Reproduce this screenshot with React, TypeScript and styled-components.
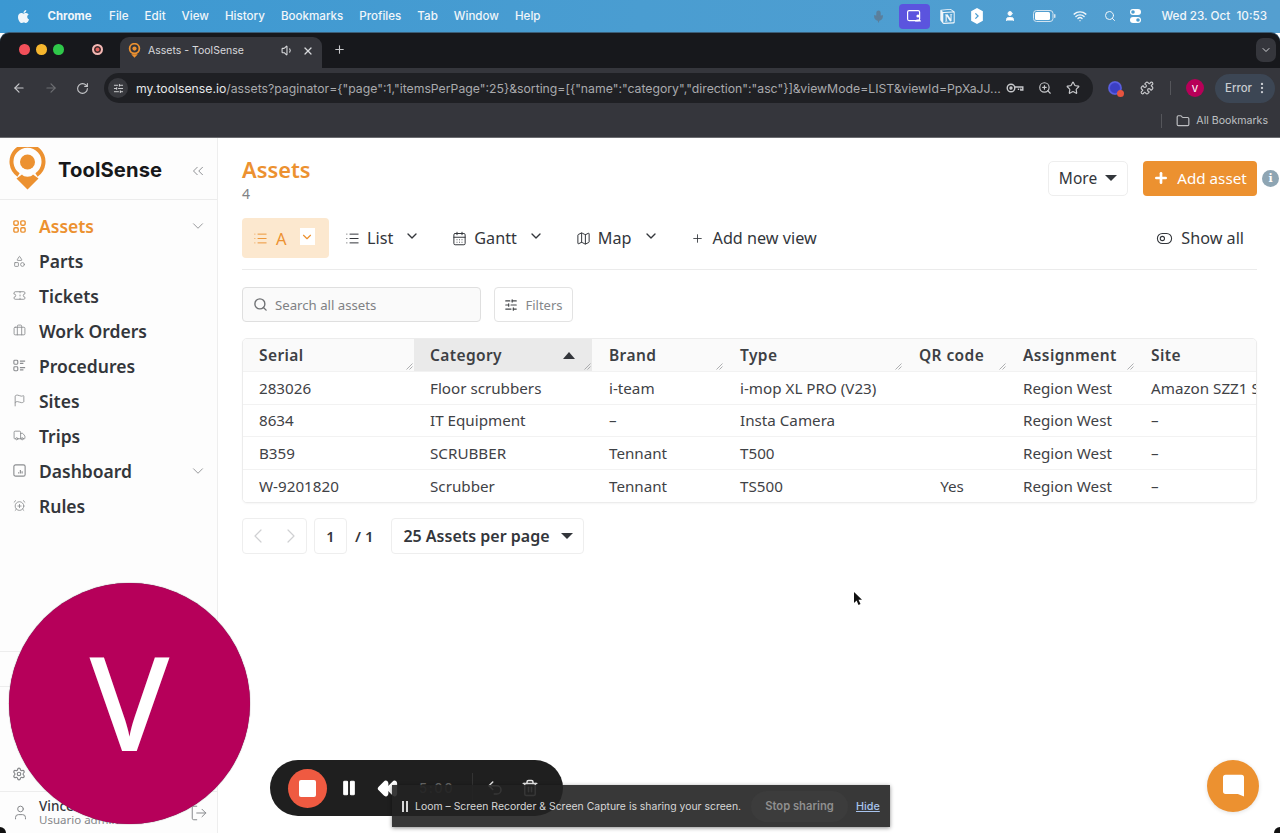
import React from "react";
import styled, { createGlobalStyle } from "styled-components";
import {
  AlarmClockPlus, ArrowLeft, ArrowRight, Briefcase, CalendarDays, ChevronDown, ChevronLeft, ChevronRight,
  ChevronsLeft, EllipsisVertical, Flag, Folder, List, LogOut, Map as MapIcon, Mic, Pause,
  Plus, Puzzle, Rewind, RotateCw, Search, Settings, Shapes, SlidersHorizontal, Star, Ticket,
  ToggleLeft, Trash2, Truck, Undo2, User, Volume1, Wifi, X, ZoomIn,
} from "lucide-react";
import { FaApple } from "react-icons/fa";
import { SiNotion } from "react-icons/si";

const Global = createGlobalStyle`
  html, body { margin: 0; padding: 0; width: 1280px; height: 833px; overflow: hidden; background: #fff; }
  * { box-sizing: border-box; }
  body { font-family: "Noto Sans", "Open Sans", sans-serif; color: #33363b; }
`;

const orange = "#ec9130";

const Screen = styled.div`
  position: relative; width: 1280px; height: 833px; overflow: hidden;
  display: flex; flex-direction: column; background: #fff;
`;

/* macOS menu bar */
const MenuBar = styled.div`
  height: 33px; flex: none; display: flex; align-items: center; padding: 0 13px 1px 16px;
  background: linear-gradient(90deg, #3b98d2, #4a9dd1 50%, #549fd0);
  color: #f1f6fa; font: 500 11.6px Inter, "Liberation Sans", sans-serif;
`;
const MenuLeft = styled.div`display: flex; align-items: center; gap: 16px;`;
const AppName = styled.span`font-weight: 700; margin-left: 0.500px; margin-right: 1.500px; font-size: 11.4px;`;
const MenuRight = styled.div`margin-left: auto; display: flex; align-items: center; gap: 0;`;
const TrayBox = styled.span<{ $w: number }>`
  width: ${(p) => p.$w}px; height: 22px; display: flex; align-items: center; justify-content: center;
`;
const ScreenShareTile = styled(TrayBox)`
  background: #5b54de; border-radius: 4px; height: 25px; margin-left: 11px;
`;
const Clock = styled.span`margin-left: 10px; white-space: pre; font-size: 11.7px;`;

/* Chrome window */
const TabStrip = styled.div`
  height: 35px; flex: none; background: #17181c; display: flex; align-items: flex-end; padding-left: 19px;
  border-radius: 9px 9px 0 0; position: relative; box-shadow: 0 -1px 0 #3b5e78;
`;
const Lights = styled.div`display: flex; gap: 6.5px; align-self: center; margin-bottom: 2px;`;
const Light = styled.span<{ $c: string }>`width: 10.5px; height: 10.5px; border-radius: 50%; background: ${(p) => p.$c};`;
const RecordDot = styled.span`
  width: 11px; height: 11px; border-radius: 50%; border: 2px solid #f3b9b5; background: #e0605a;
  align-self: center; margin: 0 17.500px 2px 28px; box-shadow: inset 0 0 0 1.5px #3a2a2c;
`;
const ActiveTab = styled.div`
  width: 202px; height: 31px; background: #35363c; border-radius: 9px 9px 0 0;
  display: flex; align-items: center; padding: 0 8px 4px 8px; color: #d8d9dc;
  font: 400 10.5px Inter, "Liberation Sans", sans-serif;
`;
const TabTitle = styled.span`margin-left: 7px; flex: 1; white-space: nowrap;`;
const NewTab = styled.span`align-self: center; margin: 0 0 2px 11px; color: #c9cacd; display: flex;`;
const TabListBtn = styled.span`
  position: absolute; right: 4px; top: 5px; width: 20px; height: 24px; border-radius: 7px;
  background: #35363c; color: #d0d1d4; display: flex; align-items: center; justify-content: center;
`;
const Toolbar = styled.div`
  height: 36px; flex: none; background: #35363c; display: flex; align-items: center; padding: 4px 5px 0 12px; color: #c7c8cb;
`;
const NavIcons = styled.div`display: flex; align-items: center; gap: 18px; margin-right: 15px;`;
const Omnibox = styled.div`
  width: 989px; height: 30px; flex: none; border-radius: 15px; background: #1f2024; display: flex; align-items: center;
  padding: 0 13px 0 4px; font: 400 12.25px Inter, "Liberation Sans", sans-serif; color: #a9aaad;
`;
const SiteInfo = styled.span`
  width: 20px; height: 20px; border-radius: 50%; background: #37383d; display: flex; align-items: center;
  justify-content: center; color: #d5d6d9; margin-right: 8px; flex: none;
`;
const Host = styled.span`color: #e6e7e9;`;
const Url = styled.span`white-space: nowrap; flex: 1; min-width: 0;`;
const UrlTools = styled.div`display: flex; align-items: center; gap: 14px; color: #c7c8cb;`;
const ExtArea = styled.div`display: flex; align-items: center; margin-left: 15px; flex: 1;`;
const ExtSpark = styled.span`
  width: 14px; height: 14px; border-radius: 50%; position: relative; flex: none;
  background: radial-gradient(circle, #3b3fc4 45%, #5d62e8 60%, #35363c 95%);
`;
const ExtDot = styled.span`
  position: absolute; right: -2px; bottom: -2px; width: 7px; height: 7px; border-radius: 50%; background: #e8543f;
`;
const ToolbarRule = styled.span`width: 1px; height: 14px; background: #55565b; margin: 0 15px 0 16px;`;
const ProfileDot = styled.span`
  width: 18px; height: 18px; border-radius: 50%; background: #b70058; color: #fff; font: 500 9px Inter, sans-serif;
  display: flex; align-items: center; justify-content: center; flex: none;
`;
const ErrorPill = styled.span`
  margin-left: 11px; width: 60px; height: 29px; border-radius: 15px; background: #3c4654; color: #c8cbd0;
  display: flex; align-items: center; justify-content: flex-end; gap: 3px; padding-right: 6px; flex: none;
  font: 500 11.4px Inter, "Liberation Sans", sans-serif;
`;
const BookmarkBar = styled.div`
  height: 34px; flex: none; background: #35363c; display: flex; align-items: center; justify-content: flex-end;
  padding-right: 12px; color: #bfc0c3; font: 400 10.6px Inter, "Liberation Sans", sans-serif; gap: 6px;
  border-bottom: 1px solid #6b6c70;
`;
const BookmarkRule = styled.span`width: 1px; height: 14px; background: #55565b; margin-right: 8px;`;

/* Page */
const Page = styled.div`flex: 1; display: flex; min-height: 0; background: #fff;`;
const Sidebar = styled.aside`
  width: 218px; flex: none; display: flex; flex-direction: column; background: #fdfdfd; border-right: 1px solid #eeeeee;
`;
const Brand = styled.div`
  height: 62px; flex: none; display: flex; align-items: center; padding: 0 10px 0 9px; border-bottom: 1px solid #ececec;
`;
const BrandName = styled.span`
  font: 700 20.2px Inter, "Open Sans", sans-serif; color: #17181a; margin-left: 12px; margin-top: 2px; flex: 1;
  letter-spacing: 0.1px;
`;
const Nav = styled.nav`display: flex; flex-direction: column; padding-top: 8.600px;`;
const NavItem = styled.div<{ $active?: boolean }>`
  height: 34.95px; display: flex; align-items: center; padding: 0 10px 0 13px; gap: 13px;
  font-size: 17.5px; font-weight: 600; color: ${(p) => (p.$active ? orange : "#33363b")};
  & > svg:first-child { color: ${(p) => (p.$active ? orange : "#8b8d90")}; flex: none; }
  & > span { flex: 1; }
  & > svg:last-child:not(:first-child) { color: #8d8f92; }
`;
const SidebarFill = styled.div`flex: 1;`;
const SideRow = styled.div<{ $h: number }>`
  height: ${(p) => p.$h}px; flex: none; border-top: 1px solid #ededed; display: flex; align-items: center;
  padding: 0 9px 0 12px; color: #85878a;
`;
const UserText = styled.div`margin-left: 10px; flex: 1; line-height: 14px;`;
const UserName = styled.div`font-size: 13.5px; color: #33363b; font-weight: 500;`;
const UserRole = styled.div`font-size: 11.5px; color: #85878a;`;

const Main = styled.main`flex: 1; min-width: 0; padding: 15px 23px 0 24px; position: relative;`;
const Header = styled.div`display: flex; align-items: flex-start; height: 65px;`;
const TitleBlock = styled.div`flex: 1;`;
const Title = styled.h1`margin: 0; font-size: 21.8px; line-height: 33px; font-weight: 600; color: ${orange};`;
const Count = styled.div`font-size: 14px; line-height: 18px; color: #808285; margin-top: -1px;`;
const MoreButton = styled.button`
  width: 80px; height: 35px; margin-top: 8px; background: #fff; border: 1px solid #eeeeee; border-radius: 5px;
  font: 400 15.5px "Noto Sans", sans-serif; color: #33363b; display: flex; align-items: center; justify-content: center; gap: 8px; padding: 0 0 2px;
`;
const AddButton = styled.button`
  width: 114px; height: 35px; margin: 8px 0 0 15px; background: ${orange}; border: 0; border-radius: 4px; color: #fff;
  font: 400 15.2px "Noto Sans", sans-serif; display: flex; align-items: center; justify-content: center; gap: 8px; padding: 0 0 2px;
`;
const InfoBadge = styled.span`
  position: absolute; right: 1px; top: 32px; width: 17px; height: 17px; border-radius: 50%; background: #8ea5b3; color: #fff;
  display: flex; align-items: center; justify-content: center; font: 700 11px "DejaVu Serif", serif;
`;
const Caret = styled.span<{ $up?: boolean }>`
  width: 0; height: 0; border-left: 6px solid transparent; border-right: 6px solid transparent;
  ${(p) => (p.$up ? "border-bottom: 7px solid #33363b;" : "border-top: 6px solid #33363b;")}
`;
const Views = styled.div`
  height: 52px; display: flex; align-items: flex-start; border-bottom: 1px solid #ebebeb;
`;
const ActiveView = styled.div`
  width: 87px; height: 40px; background: #fce8cf; border-radius: 4px; color: ${orange}; display: flex; align-items: center;
  padding-left: 11px; font-size: 16.5px; gap: 8px;
`;
const ViewChevron = styled.span`
  width: 15px; height: 17px; background: #fff; display: flex; align-items: center; justify-content: center; margin-left: 5px; margin-top: -3px;
`;
const View = styled.div`
  height: 40px; padding: 0 16px; display: flex; align-items: center; gap: 7px; font-size: 16.2px; color: #33363b;
`;
const ChevronGap = styled.span`display: flex; margin-left: 4px; margin-top: -4px;`;
const ShowAll = styled(View)`margin-left: auto; padding: 0 13px 0 0; gap: 8px;`;
const Filters = styled.div`display: flex; gap: 13px; margin-top: 17px;`;
const SearchBox = styled.div`
  width: 239px; height: 35px; border: 1px solid #dfdfdf; border-radius: 4px; background: #fafafa;
  display: flex; align-items: center; padding-left: 10px; gap: 7px; font-size: 13.2px; color: #7f8184;
`;
const FilterButton = styled.div`
  width: 79px; height: 35px; border: 1px solid #e3e3e3; border-radius: 4px; background: #fff; display: flex; align-items: center;
  justify-content: center; gap: 7px; font-size: 13px; color: #85878a;
  & > svg { color: #44474a; }
`;
const Table = styled.div`
  margin-top: 16px; border: 1px solid #ececec; border-radius: 5px; overflow: hidden; background: #fff;
  box-shadow: 0 1px 2px rgba(0,0,0,.04);
`;
const Row = styled.div<{ $head?: boolean }>`
  display: grid; grid-template-columns: 171px 178px 132px 179px 104px 128px 1fr;
  height: ${(p) => (p.$head ? "33px" : "32.6px")};
  background: ${(p) => (p.$head ? "#fafafa" : "#fff")};
  &:not(:last-child) { border-bottom: 1px solid #f2f2f2; }
  & > div:nth-child(3) { padding-left: 17px; }
`;
const HeadCell = styled.div<{ $sorted?: boolean }>`
  position: relative; display: flex; align-items: center; justify-content: space-between; padding: 0 17px 0 16px;
  font-size: 15.5px; font-weight: 600; letter-spacing: 0.4px; color: #3d4044;
  background: ${(p) => (p.$sorted ? "#eaeaea" : "transparent")};
`;
const Grip = styled.svg`position: absolute; right: 1px; bottom: 1px;`;
const Cell = styled.div<{ $center?: boolean }>`
  display: flex; align-items: center; font-size: 15.2px; color: #3f4246; white-space: nowrap; overflow: hidden;
  padding: ${(p) => (p.$center ? "0 22px 0 16px" : "0 16px")};
  justify-content: ${(p) => (p.$center ? "center" : "flex-start")};
`;
const Pager = styled.div`display: flex; align-items: center; margin-top: 15px; height: 36px;`;
const PageArrows = styled.div`
  width: 65px; height: 36px; border: 1px solid #eeeeee; border-radius: 4px; display: flex; align-items: center; justify-content: space-between;
  color: #cfd0d2; padding: 0 3px;
`;
const PageNum = styled.div`
  width: 33px; height: 36px; margin-left: 7px; border: 1px solid #eeeeee; border-radius: 4px; display: flex; align-items: center;
  justify-content: center; font-size: 14.5px; font-weight: 600;
`;
const PageTotal = styled.div`margin: 0 18px 0 8px; font-size: 15px; font-weight: 600; white-space: pre;`;
const PerPage = styled.div`
  width: 193px; height: 36px; border: 1px solid #eeeeee; border-radius: 4px; display: flex; align-items: center; justify-content: center; gap: 11px;
  font-size: 16px; font-weight: 600;
`;

/* Overlays */
const BigAvatar = styled.div`
  position: absolute; left: 9px; top: 583px; width: 241px; height: 241px; border-radius: 50%; background: #b6005a; color: #fff;
  display: flex; align-items: center; justify-content: center; font: 500 130px "Noto Sans", sans-serif; line-height: 1;
  padding-bottom: 6px; box-shadow: 0 0 1px #401030;
`;
const RecorderPill = styled.div`
  position: absolute; left: 270px; top: 760px; width: 293px; height: 56px; border-radius: 28px; background: #1f1f1f;
  display: flex; align-items: center; padding-left: 18px; color: #fff;
`;
const StopButton = styled.span`
  width: 39px; height: 39px; border-radius: 50%; background: #ef5a41; display: flex; align-items: center; justify-content: center; flex: none;
`;
const StopSquare = styled.span`width: 17px; height: 17px; border-radius: 2px; background: #fff;`;
const RecorderGroup = styled.div`display: flex; align-items: center; gap: 19px; margin-left: 13px;`;
const Timer = styled.span`font: 500 13px Inter, sans-serif; color: #666; margin-left: 21px; letter-spacing: 1.6px;`;
const RecRule = styled.span`width: 1px; height: 30px; background: #333; margin-left: 18px;`;
const DimIcons = styled.div`display: flex; gap: 17px; color: #e6e6e6; margin-left: 13px;`;
const ShareBar = styled.div`
  position: absolute; left: 392px; top: 785px; width: 498px; height: 42px; background: rgba(34,34,34,.9);
  box-shadow: 0 1px 4px rgba(0,0,0,.45); display: flex; align-items: center; padding-left: 10px;
  font: 400 10.45px Inter, "Liberation Sans", sans-serif; color: #d6d6d6;
`;
const ThinPause = styled.svg`flex: none;`;
const ShareText = styled.span`margin-left: 7px; white-space: nowrap; width: 336px; flex: none;`;
const StopShare = styled.span`
  width: 97px; height: 31px; border-radius: 16px; background: #3c3c3c; color: #8f8f8f; font-weight: 600; font-size: 11.2px;
  display: flex; align-items: center; justify-content: center; flex: none;
`;
const HideLink = styled.span`color: #a8c4ee; text-decoration: underline; margin-left: 8px; font-weight: 500; font-size: 10.8px;`;
const ChatBubble = styled.div`
  position: absolute; left: 1207px; top: 760px; width: 52px; height: 52px; border-radius: 50%; background: ${orange};
  display: flex; align-items: center; justify-content: center; box-shadow: 0 1px 4px rgba(0,0,0,.12);
`;
const CornerMark = styled.span<{ $right?: boolean }>`
  position: absolute; bottom: 0; ${(p) => (p.$right ? "right: 0;" : "left: 0;")} width: 6px; height: 6px; background: #111;
  border-${(p) => (p.$right ? "top-left" : "top-right")}-radius: 100%;
`;
const Cursor = styled.svg`position: absolute; left: 853px; top: 591px;`;

const GridIcon = () => (
  <svg width="13" height="13" viewBox="0 0 15 15" fill="none" stroke="currentColor" strokeWidth="1.6">
    <rect x="1" y="1" width="5" height="5" rx="1.3" /><rect x="9" y="1" width="5" height="5" rx="1.3" />
    <rect x="1" y="9" width="5" height="5" rx="1.3" /><rect x="9" y="9" width="5" height="5" rx="1.3" />
  </svg>
);
const ProcIcon = () => (
  <svg width="13" height="13" viewBox="0 0 15 15" fill="none" stroke="currentColor" strokeWidth="1.3">
    <rect x="1" y="1.500" width="4.500" height="4.500" rx="1" /><rect x="1" y="9" width="4.500" height="4.500" rx="1" />
    <path d="M8 2.500h6M8 5h4M8 10h6M8 12.500h4" />
  </svg>
);
const DashIcon = () => (
  <svg width="13" height="13" viewBox="0 0 15 15" fill="none" stroke="currentColor" strokeWidth="1.3">
    <rect x="1" y="1" width="13" height="13" rx="2" /><path d="M6.500 11V9.500M8.500 11V7M10.500 11V8.500" />
  </svg>
);
const Logo = () => (
  <svg width="37" height="43" viewBox="0 0 37 43">
    <path d="M9.500 28 A16 16 0 1 1 27.500 28" fill="none" stroke="#ec9130" strokeWidth="4" />
    <circle cx="18.500" cy="15" r="7.500" fill="#ec9130" />
    <path d="M7.500 31.500 L13 27.500 C15 30.500 22 30.500 24 27.500 L29.500 31.500 L18.500 42.500 Z" fill="#ec9130" />
  </svg>
);
const KeyIcon = () => (
  <svg width="18" height="12" viewBox="0 0 18 12" fill="none" stroke="currentColor" strokeWidth="1.4">
    <circle cx="5" cy="6" r="3.800" /><circle cx="5" cy="6" r="1" fill="currentColor" />
    <path d="M8.800 5h8v3h-2V6.500M12.500 6.500V8" />
  </svg>
);
const ToggleIcon = () => (
  <svg width="13" height="16" viewBox="0 0 13 16" fill="#fff">
    <rect x="1" y="1" width="11" height="6" rx="3" /><rect x="1" y="9" width="11" height="6" rx="3" />
    <circle cx="4" cy="4" r="1.800" fill="#4a9dd1" /><circle cx="9" cy="12" r="1.800" fill="#4a9dd1" />
  </svg>
);
const BatteryIcon = () => (
  <svg width="23" height="12" viewBox="0 0 23 12">
    <rect x=".5" y=".5" width="19.500" height="11" rx="3" fill="none" stroke="#d4e4f0" strokeWidth="1" />
    <rect x="2" y="2" width="15" height="8" rx="1.500" fill="#fff" />
    <rect x="21" y="4" width="1.500" height="4" rx=".7" fill="#d4e4f0" />
  </svg>
);

const columns = ["Serial", "Category", "Brand", "Type", "QR code", "Assignment", "Site"];
const rows = [
  ["283026", "Floor scrubbers", "i-team", "i-mop XL PRO (V23)", "", "Region West", "Amazon SZZ1 Store"],
  ["8634", "IT Equipment", "–", "Insta Camera", "", "Region West", "–"],
  ["B359", "SCRUBBER", "Tennant", "T500", "", "Region West", "–"],
  ["W-9201820", "Scrubber", "Tennant", "TS500", "Yes", "Region West", "–"],
];
const navItems: [string, React.ReactNode, boolean?][] = [
  ["Parts", <Shapes size={13} strokeWidth={1.6} />],
  ["Tickets", <Ticket size={13} strokeWidth={1.6} />],
  ["Work Orders", <Briefcase size={13} strokeWidth={1.6} />],
  ["Procedures", <ProcIcon />],
  ["Sites", <Flag size={13} strokeWidth={1.6} />],
  ["Trips", <Truck size={13} strokeWidth={1.6} />],
  ["Dashboard", <DashIcon />, true],
  ["Rules", <AlarmClockPlus size={13} strokeWidth={1.6} />],
];

export default function App() {
  return (
    <Screen>
      <Global />
      <MenuBar>
        <MenuLeft>
          <FaApple size={15} />
          <AppName>Chrome</AppName>
          <span>File</span><span>Edit</span><span>View</span><span>History</span><span>Bookmarks</span>
          <span>Profiles</span><span>Tab</span><span>Window</span><span>Help</span>
        </MenuLeft>
        <MenuRight>
          <TrayBox $w={20}><Mic size={13} color="#5b7f9c" fill="#5b7f9c" /></TrayBox>
          <ScreenShareTile $w={31}>
            <svg width="15" height="12" viewBox="0 0 15 12" fill="none" stroke="#fff" strokeWidth="1.2"><rect x=".6" y=".6" width="12" height="10" rx="1.500" /><circle cx="11" cy="6" r="1.600" fill="#fff" stroke="none" /><path d="M8 11.400c.3-2.400 5.700-2.400 6 0z" fill="#fff" stroke="none" /></svg>
          </ScreenShareTile>
          <TrayBox $w={34}><SiNotion size={15} /></TrayBox>
          <TrayBox $w={26}>
            <svg width="12" height="16" viewBox="0 0 11 15"><path d="M5.500 0L11 3v9l-5.500 3L0 12V3z" fill="#fff" /><path d="M4 5l2.500 2.500L4 10" stroke="#4a9dd1" strokeWidth="1.200" fill="none" /></svg>
          </TrayBox>
          <TrayBox $w={40}><User size={12} fill="#fff" /></TrayBox>
          <TrayBox $w={29}><BatteryIcon /></TrayBox>
          <TrayBox $w={42}><Wifi size={14} strokeWidth={2.400} /></TrayBox>
          <TrayBox $w={18}><Search size={12} /></TrayBox>
          <TrayBox $w={32}><ToggleIcon /></TrayBox>
          <Clock>Wed 23. Oct  10:53</Clock>
        </MenuRight>
      </MenuBar>

      <TabStrip>
        <Lights><Light $c="#f2505a" /><Light $c="#f6b62e" /><Light $c="#2fc84a" /></Lights>
        <RecordDot />
        <ActiveTab>
          <svg width="13" height="15" viewBox="0 0 37 43"><circle cx="18.500" cy="16" r="14" fill="none" stroke={orange} strokeWidth="5" /><circle cx="18.500" cy="16" r="6" fill={orange} /><path d="M9 32h19l-9.500 10z" fill={orange} /></svg>
          <TabTitle>Assets - ToolSense</TabTitle>
          <Volume1 size={13} />
          <X size={12} strokeWidth={2.400} style={{ marginLeft: 8 }} />
        </ActiveTab>
        <NewTab><Plus size={13} /></NewTab>
        <TabListBtn><ChevronDown size={12} /></TabListBtn>
      </TabStrip>

      <Toolbar>
        <NavIcons>
          <ArrowLeft size={14} />
          <ArrowRight size={14} color="#6d6e72" />
          <RotateCw size={13} />
        </NavIcons>
        <Omnibox>
          <SiteInfo><SlidersHorizontal size={11} /></SiteInfo>
          <Url><Host>my.toolsense.io</Host>/assets?paginator={'{"page":1,"itemsPerPage":25}'}&amp;sorting=[{'{"name":"category","direction":"asc"}'}]&amp;viewMode=LIST&amp;viewId=PpXaJJ...</Url>
          <UrlTools>
            <KeyIcon />
            <ZoomIn size={14} />
            <Star size={14} />
          </UrlTools>
        </Omnibox>
        <ExtArea>
          <ExtSpark><ExtDot /></ExtSpark>
          <Puzzle size={14} style={{ marginLeft: 18 }} />
          <ToolbarRule />
          <ProfileDot>V</ProfileDot>
          <ErrorPill>Error<EllipsisVertical size={14} /></ErrorPill>
        </ExtArea>
      </Toolbar>
      <BookmarkBar>
        <BookmarkRule />
        <Folder size={14} />
        <span>All Bookmarks</span>
      </BookmarkBar>

      <Page>
        <Sidebar>
          <Brand>
            <Logo />
            <BrandName>ToolSense</BrandName>
            <ChevronsLeft size={18} color="#8d8f92" strokeWidth={1.300} style={{ marginTop: 4 }} />
          </Brand>
          <Nav>
            <NavItem $active>
              <GridIcon />
              <span>Assets</span>
              <ChevronDown size={18} strokeWidth={1.200} />
            </NavItem>
            {navItems.map(([label, icon, more]) => (
              <NavItem key={label}>
                {icon}
                <span>{label}</span>
                {more && <ChevronDown size={18} strokeWidth={1.200} />}
              </NavItem>
            ))}
          </Nav>
          <SidebarFill />
          <SideRow $h={35} />
          <SideRow $h={105}>
            <Settings size={14} style={{ marginTop: 70 }} />
          </SideRow>
          <SideRow $h={42}>
            <User size={17} strokeWidth={1.400} />
            <UserText>
              <UserName>Vincent</UserName>
              <UserRole>Usuario admin</UserRole>
            </UserText>
            <LogOut size={18} strokeWidth={1.300} />
          </SideRow>
        </Sidebar>

        <Main>
          <Header>
            <TitleBlock>
              <Title>Assets</Title>
              <Count>4</Count>
            </TitleBlock>
            <MoreButton>More <Caret /></MoreButton>
            <AddButton><Plus size={16} strokeWidth={4} />Add asset</AddButton>
            <InfoBadge>i</InfoBadge>
          </Header>
          <Views>
            <ActiveView>
              <List size={15} strokeWidth={1.500} />
              A
              <ViewChevron><ChevronDown size={14} /></ViewChevron>
            </ActiveView>
            <View><List size={15} strokeWidth={1.600} />List<ChevronGap><ChevronDown size={16} strokeWidth={2} /></ChevronGap></View>
            <View><CalendarDays size={15} strokeWidth={1.600} />Gantt<ChevronGap><ChevronDown size={16} strokeWidth={2} /></ChevronGap></View>
            <View><MapIcon size={15} strokeWidth={1.600} />Map<ChevronGap><ChevronDown size={16} strokeWidth={2} /></ChevronGap></View>
            <View><Plus size={13} strokeWidth={1.600} style={{ marginRight: 2 }} />Add new view</View>
            <ShowAll><ToggleLeft size={17} strokeWidth={1.500} />Show all</ShowAll>
          </Views>
          <Filters>
            <SearchBox><Search size={15} strokeWidth={2.200} color="#6f7174" />Search all assets</SearchBox>
            <FilterButton><SlidersHorizontal size={14} />Filters</FilterButton>
          </Filters>
          <Table>
            <Row $head>
              {columns.map((c, i) => (
                <HeadCell key={c} $sorted={i === 1}>
                  {c}
                  {i === 1 && <Caret $up />}
                  {i < 6 && (
                    <Grip width="7" height="7" viewBox="0 0 7 7" fill="none" stroke="#9a9c9e" strokeWidth=".8"><path d="M.5 6.500l6-6M3.500 6.500l3-3" /></Grip>
                  )}
                </HeadCell>
              ))}
            </Row>
            {rows.map((r) => (
              <Row key={r[0]}>
                {r.map((v, i) => <Cell key={i} $center={i === 4}>{v}</Cell>)}
              </Row>
            ))}
          </Table>
          <Pager>
            <PageArrows><ChevronLeft size={24} strokeWidth={1.200} /><ChevronRight size={24} strokeWidth={1.200} /></PageArrows>
            <PageNum>1</PageNum>
            <PageTotal>/ 1</PageTotal>
            <PerPage>25 Assets per page <Caret /></PerPage>
          </Pager>
        </Main>
      </Page>

      <BigAvatar>V</BigAvatar>
      <RecorderPill>
        <StopButton><StopSquare /></StopButton>
        <RecorderGroup>
          <Pause size={18} fill="#fff" strokeWidth={1.500} />
          <Rewind size={21} fill="#fff" />
        </RecorderGroup>
        <Timer>5:00</Timer>
        <RecRule />
        <DimIcons>
          <Undo2 size={18} />
          <Trash2 size={18} />
        </DimIcons>
      </RecorderPill>
      <ShareBar>
        <ThinPause width="6" height="11" viewBox="0 0 6 11" fill="#d6d6d6"><rect x="0" width="2" height="11" /><rect x="4" width="2" height="11" /></ThinPause>
        <ShareText>Loom – Screen Recorder &amp; Screen Capture is sharing your screen.</ShareText>
        <StopShare>Stop sharing</StopShare>
        <HideLink>Hide</HideLink>
      </ShareBar>
      <ChatBubble>
        <svg width="21" height="25" viewBox="0 0 24 27"><path d="M3 0h18a3 3 0 0 1 3 3v22l-7-3H3a3 3 0 0 1-3-3V3a3 3 0 0 1 3-3z" fill="#fff" /></svg>
      </ChatBubble>
      <Cursor width="10" height="15" viewBox="0 0 10 15"><path d="M1 1v11l2.600-2.400L5.500 14l2-1-2-4.200H9z" fill="#111" /></Cursor>
      <CornerMark />
      <CornerMark $right />
    </Screen>
  );
}
